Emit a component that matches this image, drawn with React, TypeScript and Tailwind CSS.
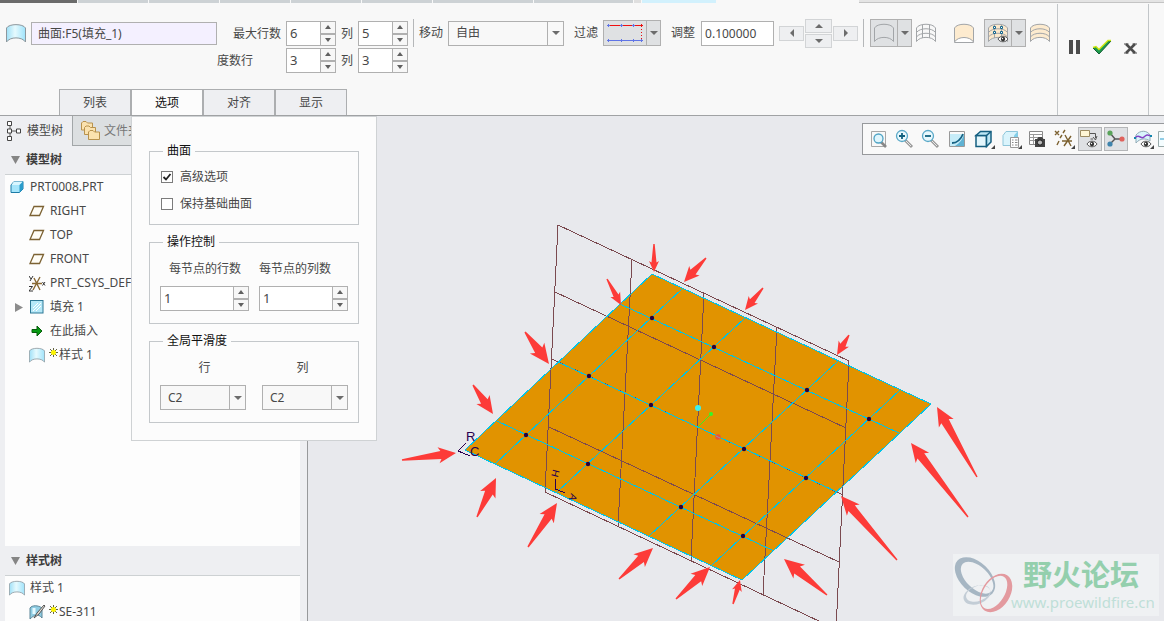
import React from 'react';

interface SpinnerProps {
  label: string;
  value: string;
  className: string;
}

interface ArrowProps {
  from: [number, number];
  to: [number, number];
  width: number;
}

interface TreeItemProps {
  icon: React.ReactNode;
  label: string;
  root?: boolean;
  expandable?: boolean;
  isNew?: boolean;
}

const SurfaceIcon = ({ size = 20 }: { size?: number }) => (
  <svg width={size} height={size} viewBox="0 0 20 20" className="shrink-0">
    <defs>
      <linearGradient id="surface" x1="0" x2="1">
        <stop offset="0" stopColor="#9fe0f7" />
        <stop offset=".45" stopColor="#e6fafe" />
        <stop offset="1" stopColor="#9fe3fb" />
      </linearGradient>
    </defs>
    <path
      d="M.5 5C3 .5 17 .5 19.500 5V19C16 13.500 4 13.500 .5 19Z"
      fill="url(#surface)"
      stroke="#8d979d"
    />
  </svg>
);

// Curved patch used by the display style buttons
const PatchIcon = ({ fill = 'none', mesh = false, bands = false, nodes = false, flat = false }) => (
  <svg width="20" height="20" viewBox="0 0 20 20" className="shrink-0">
    <path
      d={flat ? 'M.5 5C3 0 17 0 19.500 5V19.500H.5Z' : 'M.5 5C3 0 17 0 19.500 5V18.500C16 13 4 13 .5 18.500Z'}
      fill={fill}
      stroke="#a2a5a8"
    />
    {flat && <path d="M.5 19C4 13 16 13 19.500 19" fill="#fff" stroke="#a2a5a8" />}
    {(mesh || bands) && (
      <path d="M.5 9.500C4 4.500 16 4.500 19.500 9.500M.5 14C4 9 16 9 19.500 14" fill="none" stroke="#a2a5a8" />
    )}
    {mesh && <path d="M6.500 2V15M13.500 2V15" stroke="#a2a5a8" />}
    {nodes && (
      <>
        <g fill="#fff" stroke="#14668d">
          <path d="M5.500 3.500h2v2h-2zM12.500 3.500h2v2h-2zM5.500 8.500h2v2h-2zM12.500 8.500h2v2h-2z" />
        </g>
        <EyeShape x={10} y={12} />
      </>
    )}
  </svg>
);

const EyeShape = ({ x, y }: { x: number; y: number }) => (
  <g transform={`translate(${x} ${y})`}>
    <path d="M0 4C2 .3 8 .3 10 4C8 7.700 2 7.700 0 4Z" fill="#fff" stroke="#555" />
    <circle cx="5" cy="4" r="2.200" fill="#333" />
    <circle cx="4.500" cy="3.500" r=".7" fill="#fff" />
  </g>
);

const Triangle = ({ dir }: { dir: 'up' | 'down' | 'left' | 'right' }) => {
  const shapes = {
    up: 'M0 6L4 2L8 6Z',
    down: 'M0 2L4 6L8 2Z',
    left: 'M6 0L2 4L6 8Z',
    right: 'M2 0L6 4L2 8Z',
  };
  return (
    <svg width="8" height="8" viewBox="0 0 8 8" className="shrink-0">
      <path d={shapes[dir]} fill="#6c6c6c" />
    </svg>
  );
};

const SpinArrow = ({ up = false }: { up?: boolean }) => (
  <svg width="6" height="4" viewBox="0 0 6 4">
    <path d={up ? 'M0 4L3 0L6 4Z' : 'M0 0L3 4L6 0Z'} fill="#606060" />
  </svg>
);

const Spinner: React.FC<SpinnerProps> = ({ label, value, className }) => (
  <div className={`flex h-[25px] border border-[#b0b0b0] bg-white ${className}`}>
    <input
      aria-label={label}
      defaultValue={value}
      className="w-0 min-w-0 flex-1 bg-white pb-px pl-[3px] text-[13px] leading-4 outline-none"
    />
    <div className="flex w-[15px] shrink-0 flex-col border-l border-[#b0b0b0] bg-[#f7f7f7]">
      <button aria-label={`${label} 增加`} className="flex flex-1 items-center justify-center border-b border-[#b0b0b0]">
        <SpinArrow up />
      </button>
      <button aria-label={`${label} 减少`} className="flex flex-1 items-center justify-center border-t border-[#b0b0b0]">
        <SpinArrow />
      </button>
    </div>
  </div>
);

const Select = ({ label, value, className }: { label: string; value: string; className: string }) => (
  <div className={`relative h-[25px] border border-[#b0b0b0] bg-[#f8f8f8] ${className}`}>
    <select aria-label={label} defaultValue={value} className="h-full w-full appearance-none pl-[7px] leading-4 outline-none">
      <option>{value}</option>
    </select>
    <span className="pointer-events-none absolute inset-y-0 right-0 flex w-4 items-center justify-center border-l border-[#b0b0b0]">
      <Triangle dir="down" />
    </span>
  </div>
);

const SplitButton = ({ label, children, className }: { label: string; children: React.ReactNode; className: string }) => (
  <div className={`flex shrink-0 border border-[#b0b0b0] bg-[#dfe1e3] ${className}`}>
    <button aria-label={label} className="flex flex-1 items-center justify-center">
      {children}
    </button>
    <button aria-label={`${label} 更多`} className="flex w-[14px] items-center justify-center border-l border-[#b0b0b0]">
      <Triangle dir="down" />
    </button>
  </div>
);

const Rule = () => <div className="h-7 w-px shrink-0 bg-[#b5b7b9]" />;

const NudgePad = () => (
  <div className="flex shrink-0 items-center gap-px">
    <button aria-label="左移" className="flex h-[15px] w-[25px] items-center justify-center border border-[#d2d4d6] bg-[#eeeff1]">
      <Triangle dir="left" />
    </button>
    <div className="flex flex-col gap-px">
      <button aria-label="上移" className="flex h-[14px] w-[27px] items-center justify-center border border-[#d2d4d6] bg-[#eeeff1]">
        <Triangle dir="up" />
      </button>
      <button aria-label="下移" className="flex h-[14px] w-[27px] items-center justify-center border border-[#d2d4d6] bg-[#eeeff1]">
        <Triangle dir="down" />
      </button>
    </div>
    <button aria-label="右移" className="flex h-[15px] w-[25px] items-center justify-center border border-[#d2d4d6] bg-[#eeeff1]">
      <Triangle dir="right" />
    </button>
  </div>
);

const OptionCheck = ({ label, checked = false }: { label: string; checked?: boolean }) => (
  <label className="flex h-[27px] items-center gap-[7px]">
    <span className="grid">
      <input
        type="checkbox"
        defaultChecked={checked}
        className="peer size-3 appearance-none border border-[#7c7c7c] bg-white [grid-area:1/1]"
      />
      <svg viewBox="0 0 12 12" className="pointer-events-none invisible size-3 peer-checked:visible [grid-area:1/1]">
        <path d="M2.500 6L5 8.500L9.500 3" fill="none" stroke="#222" strokeWidth="1.800" />
      </svg>
    </span>
    {label}
  </label>
);

const OptionsPanel = () => (
  <div className="absolute left-[72px] top-full z-20 mt-px flex w-[246px] flex-col gap-[9px] border border-[#cfd2d4] bg-[#fcfcfc] px-[17px] pb-[17px] pt-[26px]">
    <fieldset className="h-[82px] border border-[#c4c8cb] pl-[11px] pt-[4px]">
      <legend className="ml-[2px] px-[4px] leading-4 text-[#111]">曲面</legend>
      <OptionCheck label="高级选项" checked />
      <OptionCheck label="保持基础曲面" />
    </fieldset>
    <fieldset className="h-[90px] border border-[#c4c8cb] px-[10px] pt-[10px]">
      <legend className="ml-[3px] px-[4px] leading-4 text-[#111]">操作控制</legend>
      <div className="flex justify-between">
        <div className="flex flex-col gap-[8px]">
          <span className="pl-[9px] leading-[18px]">每节点的行数</span>
          <Spinner label="每节点的行数" value="1" className="w-[89px]" />
        </div>
        <div className="flex flex-col gap-[8px]">
          <span className="leading-[18px]">每节点的列数</span>
          <Spinner label="每节点的列数" value="1" className="w-[89px]" />
        </div>
      </div>
    </fieldset>
    <fieldset className="h-[90px] border border-[#c4c8cb] px-[10px] pt-[10px]">
      <legend className="ml-[3px] px-[4px] leading-4 text-[#111]">全局平滑度</legend>
      <div className="flex justify-between">
        <div className="flex flex-col gap-[8px]">
          <span className="pl-[3px] text-center leading-[18px]">行</span>
          <Select label="行" value="C2" className="w-[86px]" />
        </div>
        <div className="flex flex-col gap-[8px]">
          <span className="pr-[5px] text-center leading-[18px]">列</span>
          <Select label="列" value="C2" className="w-[86px]" />
        </div>
      </div>
    </fieldset>
  </div>
);

const tabs = ['列表', '选项', '对齐', '显示'];

const Ribbon = () => (
  <header className="relative z-10 flex shrink-0 border-b border-[#a0a2a4] bg-[#f8f8f8]">
    <div className="flex min-w-0 flex-1 flex-col pt-4">
      <div className="flex items-start pl-[6px]">
        <div className="flex h-7 items-center gap-[5px]">
          <SurfaceIcon />
          <input
            aria-label="曲面"
            defaultValue="曲面:F5(填充_1)"
            className="h-[23px] w-[186px] border border-[#b0b0b0] bg-[#f4f0ff] pl-[6px] leading-4 outline-none"
          />
        </div>
        <div className="mt-[2px] grid grid-cols-[64px_50px_12px_50px] items-center gap-x-[5px] gap-y-[2px]">
          <span className="text-right">最大行数</span>
          <Spinner label="最大行数" value="6" className="w-[50px]" />
          <span>列</span>
          <Spinner label="最大列数" value="5" className="w-[50px]" />
          <span>度数行</span>
          <Spinner label="度数行" value="3" className="w-[50px]" />
          <span>列</span>
          <Spinner label="度数列" value="3" className="w-[50px]" />
        </div>
        <div className="ml-[5px] flex h-7 items-center gap-[5px]">
          <Rule />
          <span className="shrink-0">移动</span>
          <Select label="移动" value="自由" className="w-[116px]" />
          <span className="ml-[5px] shrink-0">过滤</span>
          <SplitButton label="过滤" className="h-[26px] w-[58px]">
            <svg width="36" height="18" viewBox="0 0 36 18">
              <path d="M1 1.500H35" stroke="#f01010" />
              <path d="M34.500 2V16" stroke="#e81010" strokeDasharray="1 2" />
              <path d="M1 16.500H35" stroke="#5f74e6" />
              <path
                d="M0 1.500h3M1.500 0v3M13 1.500h3M14.500 0v3M25 1.500h3M26.500 0v3M0 16.500h3M1.500 15v3M13 16.500h3M14.500 15v3M25 16.500h3M26.500 15v3M33 16.500h3M34.500 15v3"
                stroke="#5f74e6"
              />
              <path d="M33 1.500h3M34.500 0v3" stroke="#e81010" />
            </svg>
          </SplitButton>
          <span className="ml-[5px] shrink-0">调整</span>
          <input
            aria-label="调整"
            defaultValue="0.100000"
            className="ml-px h-[25px] w-[73px] border border-[#b0b0b0] bg-white pl-[3px] leading-4 outline-none"
          />
          <NudgePad />
          <Rule />
        </div>
        <div className="ml-[6px] flex h-7 items-center gap-[4px]">
          <SplitButton label="轮廓" className="h-7 w-[42px]">
            <PatchIcon />
          </SplitButton>
          <button aria-label="网格">
            <PatchIcon mesh />
          </button>
          <button aria-label="着色" className="ml-[14px]">
            <PatchIcon fill="#fdebcf" flat />
          </button>
          <SplitButton label="控制点" className="ml-[6px] h-7 w-[42px]">
            <PatchIcon fill="#fbe8cb" mesh nodes />
          </SplitButton>
          <button aria-label="条纹">
            <PatchIcon fill="#fdebcf" bands />
          </button>
        </div>
      </div>
      <nav className="relative ml-[59px] mt-4 flex w-72">
        {tabs.map((tab) => (
          <button
            key={tab}
            className={`h-[26px] w-[72px] border-x border-t border-[#acaeb0] ${
              tab === '选项' ? 'bg-[#fcfcfc] text-[#111]' : 'bg-[#eeeff2]'
            }`}
          >
            {tab}
          </button>
        ))}
        <OptionsPanel />
      </nav>
    </div>
    <div className="mt-px flex w-[92px] shrink-0 items-start justify-between border-x border-[#c2c6c9] pl-[11px] pr-[11px] pt-[34px]">
      <button aria-label="暂停">
        <svg width="11" height="20" viewBox="0 0 11 20">
          <path d="M0 2H4V16H0ZM7 2H11V16H7Z" fill="#4d4d4d" />
        </svg>
      </button>
      <button aria-label="确定">
        <svg width="20" height="20" viewBox="0 0 20 20">
          <path d="M1 10L4 9L7 12L16 3H19L7 16Z" fill="#1d9a4d" stroke="#145d33" />
          <path d="M1 9.500L4 8.500L7 11.500L16 2.500H19" fill="none" stroke="#cdeb12" strokeWidth="1.500" />
        </svg>
      </button>
      <button aria-label="取消">
        <svg width="13" height="20" viewBox="0 0 13 20">
          <path d="M2 6L11 15M11 6L2 15" stroke="#4d4d4d" strokeWidth="2.500" />
          <path d="M0 6H4.500M8.500 6H13M0 15H4.500M8.500 15H13" stroke="#4d4d4d" />
        </svg>
      </button>
    </div>
    <div className="w-[15px] shrink-0" />
  </header>
);

const PlaneIcon = () => (
  <svg width="16" height="16" viewBox="0 0 16 16">
    <path d="M5 3.500H14.500L10.500 12.500H1Z" fill="#fffdf6" stroke="#7c6233" strokeWidth="1.300" />
  </svg>
);

const PartIcon = () => (
  <svg width="14" height="14" viewBox="0 0 14 14">
    <path d="M1 5L4 1.500H13V9L9.500 12.500H1Z" fill="#a5e5fb" stroke="#1c7ba6" />
    <path d="M1.500 5H9.500L13 1.500H4Z" fill="#d9f6ff" />
    <path d="M9.500 5V12.500L13 9V1.500Z" fill="#2b9ccb" />
  </svg>
);

const CsysIcon = () => (
  <svg width="17" height="17" viewBox="0 0 17 17">
    <path d="M3 8.500H13M4 15L11 2M5 3L11 15" stroke="#8a6a35" strokeWidth="1.400" />
    <path d="M0 1L2 4M4 1L1 6M0 11.500H3.500L0 16H4M13.500 7L16 10.500M16 7L13.500 10.500" fill="none" stroke="#333" />
  </svg>
);

const FillIcon = () => (
  <svg width="14" height="14" viewBox="0 0 14 14">
    <rect x=".5" y=".5" width="12.500" height="12.500" fill="#b5e8f8" stroke="#2d7896" />
    <path d="M3 8L8 3M3 11L11 3M6 11L11 6" stroke="#fff" />
  </svg>
);

const InsertIcon = () => (
  <svg width="12" height="12" viewBox="0 0 12 12">
    <path d="M1 4.500H6V1L11 6L6 11V7.500H1Z" fill="#079a13" stroke="#075c0c" />
  </svg>
);

const SketchIcon = () => (
  <svg width="17" height="16" viewBox="0 0 17 16">
    <path d="M1 4C3 1 9 1 13 4L13 14C9 9 5 11 1 15Z" fill="#8fcde3" stroke="#5b8597" />
    <path d="M5 4V10" stroke="#e5f9ff" strokeWidth="3" />
    <path d="M5 14L8 9L15 1L16 2L10 10Z" fill="#e8e2d8" stroke="#555" />
  </svg>
);

const TreeItem: React.FC<TreeItemProps> = ({ icon, label, root, expandable, isNew }) => (
  <li className={`flex h-6 items-center whitespace-nowrap ${root ? 'pl-[3px]' : 'pl-[10px]'}`}>
    {!root && (
      <span className="w-[13px] shrink-0">
        {expandable && (
          <svg width="8" height="9" viewBox="0 0 8 9">
            <path d="M0 0L8 4.500L0 9Z" fill="#8c8c8c" />
          </svg>
        )}
      </span>
    )}
    <span className="flex w-[18px] shrink-0 justify-center">{icon}</span>
    {isNew && (
      <svg width="9" height="9" viewBox="0 0 9 9" className="ml-[3px] mr-px mt-[5px] self-start">
        <path d="M4.500 0V9M0 4.500H9M1 1L8 8M8 1L1 8" stroke="#3c3c10" strokeWidth=".8" />
        <circle cx="4.500" cy="4.500" r="2.500" fill="#fbf300" />
      </svg>
    )}
    <span className={isNew ? '' : 'ml-[4px]'}>{label}</span>
  </li>
);

const TreeHeader = ({ label }: { label: string }) => (
  <h2 className="flex h-7 shrink-0 items-center gap-[6px] pl-[11px] font-bold text-[#3c3c3c]">
    <svg width="9" height="8" viewBox="0 0 9 8">
      <path d="M0 0H9L4.500 8Z" fill="#858585" />
    </svg>
    {label}
  </h2>
);

const Sidebar = () => (
  <aside className="flex w-[308px] shrink-0 flex-col border-r border-[#97999b] bg-[#eeeff2]">
    <div className="flex h-[30px] shrink-0">
      <button className="flex w-[72px] items-center gap-[6px] pl-[7px]">
        <svg width="14" height="20" viewBox="0 0 14 20">
          <path d="M3 5V15M5 10H10" stroke="#555" />
          <path d="M.5 .5h4v4h-4zM.5 8h4v4h-4zM.5 15.500h4v4h-4zM9.500 8h4v4h-4z" fill="#fff" stroke="#444" />
        </svg>
        模型树
      </button>
      <button className="flex flex-1 items-center gap-[4px] border-b border-l border-[#a2a6a8] bg-[#dcdfe1] pl-[8px] text-[#777]">
        <svg width="19" height="19" viewBox="0 0 19 19">
          <g fill="#fbe2ae" stroke="#b8924d">
            <path d="M.5 2L2 .5H5L6.500 2H11.500V9H.5Z" />
            <path d="M3.500 6.500L5 5H8L9.500 6.500H14.500V13.500H3.500Z" />
            <path d="M7.500 11L9 9.500H12L13.500 11H18.500V18.500H7.500Z" />
          </g>
        </svg>
        文件夹
      </button>
    </div>
    <TreeHeader label="模型树" />
    <ul className="ml-[5px] mr-[7px] flex-1 overflow-hidden border-t border-[#cdd1d3] bg-[#fdfdfd]">
      <TreeItem root icon={<PartIcon />} label="PRT0008.PRT" />
      <TreeItem icon={<PlaneIcon />} label="RIGHT" />
      <TreeItem icon={<PlaneIcon />} label="TOP" />
      <TreeItem icon={<PlaneIcon />} label="FRONT" />
      <TreeItem icon={<CsysIcon />} label="PRT_CSYS_DEF" />
      <TreeItem expandable icon={<FillIcon />} label="填充 1" />
      <TreeItem icon={<InsertIcon />} label="在此插入" />
      <TreeItem isNew icon={<SurfaceIcon size={16} />} label="样式 1" />
    </ul>
    <div className="flex h-[75px] shrink-0 flex-col overflow-hidden pt-px">
      <TreeHeader label="样式树" />
      <ul className="ml-[5px] mr-[7px] border-t border-[#cdd1d3] bg-[#fdfdfd]">
        <TreeItem root icon={<SurfaceIcon size={16} />} label="样式 1" />
        <TreeItem isNew icon={<SketchIcon />} label="SE-311" />
      </ul>
    </div>
  </aside>
);

const ToolButton = ({
  label,
  active,
  menu,
  children,
}: {
  label: string;
  active?: boolean;
  menu?: boolean;
  children: React.ReactNode;
}) => (
  <button
    aria-label={label}
    className={`flex h-6 shrink-0 items-center justify-center ${menu ? 'w-[25px]' : 'w-6'} ${
      active ? 'border border-[#b4b6b8] bg-[#dfe1e4]' : ''
    }`}
  >
    <svg width="22" height="20" viewBox="0 0 22 20" className="shrink-0">
      {children}
      {menu && <path d="M22 16V20H18Z" fill="#444" />}
    </svg>
  </button>
);

const Lens = ({ sign }: { sign: string }) => (
  <>
    <path d="M11 11L18 18" stroke="#999" strokeWidth="3" />
    <path d="M12 12L17 17" stroke="#e8e8e8" />
    <circle cx="8" cy="7" r="5.500" fill="#e9f8fd" stroke="#5aa9c8" strokeWidth="1.300" />
    <path d={sign} stroke="#11617f" strokeWidth="1.800" />
  </>
);

const ViewToolbar = () => (
  <div className="absolute right-0 top-[7px] flex h-8 w-[302px] items-center gap-[2px] overflow-hidden border-y border-l border-[#97999c] bg-[#f9f9f9] pl-[4px]">
    <ToolButton label="重新调整">
      <path d="M3.500 2.500H17.500V17.500H3.500Z" fill="#f8f8f8" stroke="#a7a7a7" />
      <path d="M13 13L18 18" stroke="#888" strokeWidth="2.600" />
      <circle cx="10.500" cy="9.500" r="4.500" fill="#dff5fc" stroke="#4fa3c4" strokeWidth="1.300" />
    </ToolButton>
    <ToolButton label="放大">
      <Lens sign="M5 7H11M8 4V10" />
    </ToolButton>
    <ToolButton label="缩小">
      <Lens sign="M5 7H11" />
    </ToolButton>
    <ToolButton label="重画">
      <path d="M3.500 2.500H18.500V17.500H3.500Z" fill="#fafafa" stroke="#999" />
      <path d="M4 5H18V17H4Z" fill="#c6ecf8" />
      <path d="M18 5V17H9C14 14 17 10 18 5Z" fill="#5fb2d3" />
      <path d="M6 14C11 14 15 10 17 5" fill="none" stroke="#176384" strokeWidth="1.800" />
    </ToolButton>
    <ToolButton label="显示样式" menu>
      <path d="M3 6.500H13.500V17.500H3Z" fill="#e3f6fc" stroke="#155f80" strokeWidth="1.500" />
      <path d="M3 6.500L7.500 2.500H18V13L13.500 17.500V6.500Z" fill="#bde7f5" stroke="#155f80" strokeWidth="1.500" />
      <path d="M13.500 6.500L18 2.500" stroke="#155f80" strokeWidth="1.500" />
    </ToolButton>
    <ToolButton label="已保存方向" menu>
      <path d="M3 6.500L6 2.500H17.500V13L14 16.500H3Z" fill="#daf4fc" stroke="#8fc6da" />
      <path d="M14 6.500L17.500 2.500V13L14 16.500Z" fill="#83cfe9" />
      <path d="M10.500 8.500H18.500V18.500H10.500Z" fill="#fff" stroke="#999" />
      <path d="M12 11h1.500M15 11h2.500M12 13.500h1.500M15 13.500h2.500M12 16h1.500M15 16h2.500" stroke="#888" />
    </ToolButton>
    <ToolButton label="视图管理器">
      <path d="M3.500 2.500H16.500V15.500H3.500Z" fill="#fff" stroke="#888" />
      <path d="M3.500 5.500H16.500M3.500 8.500H16M3.500 11.500H9M7.500 5.500V15" stroke="#999" />
      <path d="M9 10H11L12.500 8H16L17.500 10H19V18H9Z" fill="#444" />
      <circle cx="14" cy="13.500" r="2.600" fill="#bbb" stroke="#222" />
    </ToolButton>
    <ToolButton label="基准显示过滤器" menu>
      <path
        d="M2 2L6 6M6 2L2 6M12 1L10 4M9 6L7 9M6 12L4 16M12 6L18 17M18 7L11 17M9 12H19"
        stroke="#7c6130"
        strokeWidth="1.400"
      />
    </ToolButton>
    <ToolButton label="注释显示" active>
      <path d="M1.500 1.500H10.500V7.500H1.500Z" fill="#fff6d5" stroke="#9d8c63" />
      <path d="M11 4.500H16.500V9M14 8L16.500 11L18 7M11.500 10H14" fill="none" stroke="#555" />
      <EyeShape x={8} y={11} />
    </ToolButton>
    <ToolButton label="旋转中心" active>
      <path d="M5 4L10 10M5 15L10 10H17" fill="none" stroke="#555" strokeWidth="1.400" />
      <circle cx="5" cy="4" r="2.600" fill="#59a35a" />
      <circle cx="5" cy="15" r="2.600" fill="#3f84ad" />
      <circle cx="17" cy="10" r="2.600" fill="#e0625c" />
    </ToolButton>
    <ToolButton label="曲率显示" menu>
      <path d="M4 6C8 1 15 1 18 6V12C14 9 8 9 4 14Z" fill="#d9f4fc" stroke="#91aab5" />
      <path d="M3 9C7 4 9 11 12 8S16 6 19 7" fill="none" stroke="#8544c5" strokeWidth="1.500" />
      <path d="M2 8h2v2h-2zM18 6h2v2h-2z" fill="#1285ad" />
      <EyeShape x={9} y={11} />
    </ToolButton>
    <ToolButton label="方向">
      <path d="M.5 2.500H16V17.500H.5Z" fill="#f5fdff" stroke="#9aa" />
      <path d="M2 10H14" stroke="#2b9ccb" />
    </ToolButton>
  </div>
);

// Tapered marker: thin at the tail, wide at the head
const Arrow: React.FC<ArrowProps> = ({ from, to, width }) => {
  const length = Math.hypot(to[0] - from[0], to[1] - from[1]);
  const angle = (Math.atan2(to[1] - from[1], to[0] - from[0]) * 180) / Math.PI;
  const half = width / 2;
  const neck = length - width * 0.95;
  const barb = length - width * 1.1;
  return (
    <path
      d={`M0 -.7L${neck} ${-half / 2}L${barb} ${-half}L${length} 0L${barb} ${half}L${neck} ${half / 2}L0 .7Z`}
      transform={`translate(${from[0]} ${from[1]}) rotate(${angle})`}
    />
  );
};

const arrows: ArrowProps[] = [
  { from: [654, 244], to: [654, 272], width: 10 },
  { from: [706, 258], to: [684, 282], width: 14 },
  { from: [763, 288], to: [745, 310], width: 12 },
  { from: [849, 335], to: [837, 355], width: 12 },
  { from: [607, 279], to: [621, 305], width: 11 },
  { from: [525, 332], to: [549, 364], width: 18 },
  { from: [473, 385], to: [493, 414], width: 16 },
  { from: [402, 460], to: [456, 453], width: 16 },
  { from: [477, 517], to: [496, 478], width: 17 },
  { from: [528, 547], to: [557, 503], width: 17 },
  { from: [619, 579], to: [653, 548], width: 17 },
  { from: [676, 599], to: [710, 567], width: 17 },
  { from: [733, 604], to: [740, 580], width: 10 },
  { from: [827, 595], to: [784, 559], width: 18 },
  { from: [897, 560], to: [841, 496], width: 17 },
  { from: [968, 517], to: [911, 443], width: 17 },
  { from: [977, 477], to: [937, 407], width: 17 },
];

const nodes = [
  [652, 318], [714, 347], [807, 390], [869, 419],
  [589, 376], [651, 405], [744, 449], [806, 478],
  [526, 435], [588, 464], [681, 507], [743, 536],
];

const Model = () => (
  <svg width="856" height="505" viewBox="308 116 856 505" className="absolute left-0 top-0">
    <path d="M465 450L652 274L931 404L742 580Z" fill="#e19300" />
    <g fill="none" stroke="#7b4a50" shapeRendering="crispEdges">
      <path d="M558 225L849 361L836 630M558 225L545 492L840 631" />
      <path d="M555 292L846 428M552 359L843 495M549 427L839 562" />
      <path d="M632 259L618 526M704 293L691 560M777 327L763 595" />
    </g>
    <g fill="none" stroke="#00c3e6" shapeRendering="crispEdges">
      <path d="M465 450L652 274L931 404L742 580Z" />
      <path d="M620 304L899 433M558 362L837 492M497 421L774 551" />
      <path d="M683 288L495 464M745 318L557 492M838 361L649 536M900 390L711 566" />
    </g>
    {nodes.map(([x, y]) => (
      <circle key={`${x}-${y}`} cx={x} cy={y} r="2.200" fill="#28003c" />
    ))}
    <path d="M698 427L711 414" stroke="#3cf01e" />
    <circle cx="698" cy="408" r="3" fill="#3df0f0" />
    <circle cx="711" cy="414" r="2" fill="#32fa28" />
    <circle cx="718" cy="437" r="2.700" fill="#ee5038" />
    <path d="M716 436L720 438" stroke="#8a9bb0" />
    <g fill="none" stroke="#2a0050" shapeRendering="crispEdges">
      <path d="M466 443L458 451L470 456M555.500 479V489L565 493" />
    </g>
    <g fill="#2a0050" fontFamily="Liberation Sans, sans-serif" fontSize="13">
      <text x="466" y="441">R</text>
      <text x="470" y="456">C</text>
      <text x="553" y="469" fontSize="10" transform="rotate(105 553 469)">H</text>
      <text x="571" y="493" fontSize="10" transform="rotate(110 571 493)">A</text>
    </g>
    <g fill="#fd3b38">
      {arrows.map((arrow) => (
        <Arrow key={arrow.from.join('-')} {...arrow} />
      ))}
    </g>
  </svg>
);

const Watermark = () => (
  <div className="absolute bottom-[5px] right-[5px] flex h-[62px] w-[206px] bg-[#eff1f3]">
    <svg width="60" height="62" viewBox="0 0 60 62" className="shrink-0" fillRule="evenodd">
      <path
        d="M-24 0A24 15 0 1 0 24 0A24 15 0 1 0 -24 0ZM-18 -1A20 11 0 1 0 22 -1A20 11 0 1 0 -18 -1Z"
        transform="translate(22 23) rotate(44)"
        fill="#a6b6c3"
      />
      <path
        d="M-14 0A14 9 0 1 0 14 0A14 9 0 1 0 -14 0ZM-11 -1A12.500 7.500 0 1 0 14 -1A12.500 7.500 0 1 0 -11 -1Z"
        transform="translate(24 41) rotate(-20)"
        fill="#c3cdd6"
      />
      <path
        d="M-21 0A21 14 0 1 0 21 0A21 14 0 1 0 -21 0ZM-19 -2A18.500 10.500 0 1 0 18 -2A18.500 10.500 0 1 0 -19 -2Z"
        transform="translate(43 39) rotate(-58)"
        fill="#e39a9f"
      />
    </svg>
    <div className="-ml-[2px] flex flex-col whitespace-nowrap">
      <span className="pl-[12px] pt-[3px] text-[29px] font-bold leading-[36px] text-[#94cfad]">野火论坛</span>
      <span className="text-[15px] leading-[18px] text-[#bfdfd8]">www.proewildfire.cn</span>
    </div>
  </div>
);

const App: React.FC = () => (
  <div className="flex h-screen flex-col overflow-hidden bg-[#e8e9ed] font-['Noto_Sans','Noto_Sans_CJK_SC',sans-serif] text-[12px] leading-4 text-[#484848]">
    <div className="flex h-[3px] shrink-0 gap-px bg-[#f8f8f8]">
      <div className="w-[77px] bg-[#6b6b6b]" />
      <div className="w-[70px] bg-[#cdd2d5]" />
      <div className="w-[70px] bg-[#cdd2d5]" />
      <div className="w-[70px] bg-[#cdd2d5]" />
      <div className="w-[70px] bg-[#cdd2d5]" />
      <div className="w-[70px] bg-[#cdd2d5]" />
      <div className="w-[100px] bg-[#cdd2d5]" />
      <div className="w-[99px] bg-[#cdd2d5]" />
      <div className="w-[7px] bg-[#dfdfdf]" />
      <div className="w-[74px] bg-[#d2f1fd]" />
      <div className="w-[141px]" />
      <div className="flex-1 border-b border-[#c4c4c4] bg-[#e4e4e4]" />
    </div>
    <Ribbon />
    <div className="flex min-h-0 flex-1">
      <Sidebar />
      <main className="relative min-w-0 flex-1 overflow-hidden">
        <Model />
        <ViewToolbar />
        <Watermark />
      </main>
    </div>
  </div>
);

export default App;
